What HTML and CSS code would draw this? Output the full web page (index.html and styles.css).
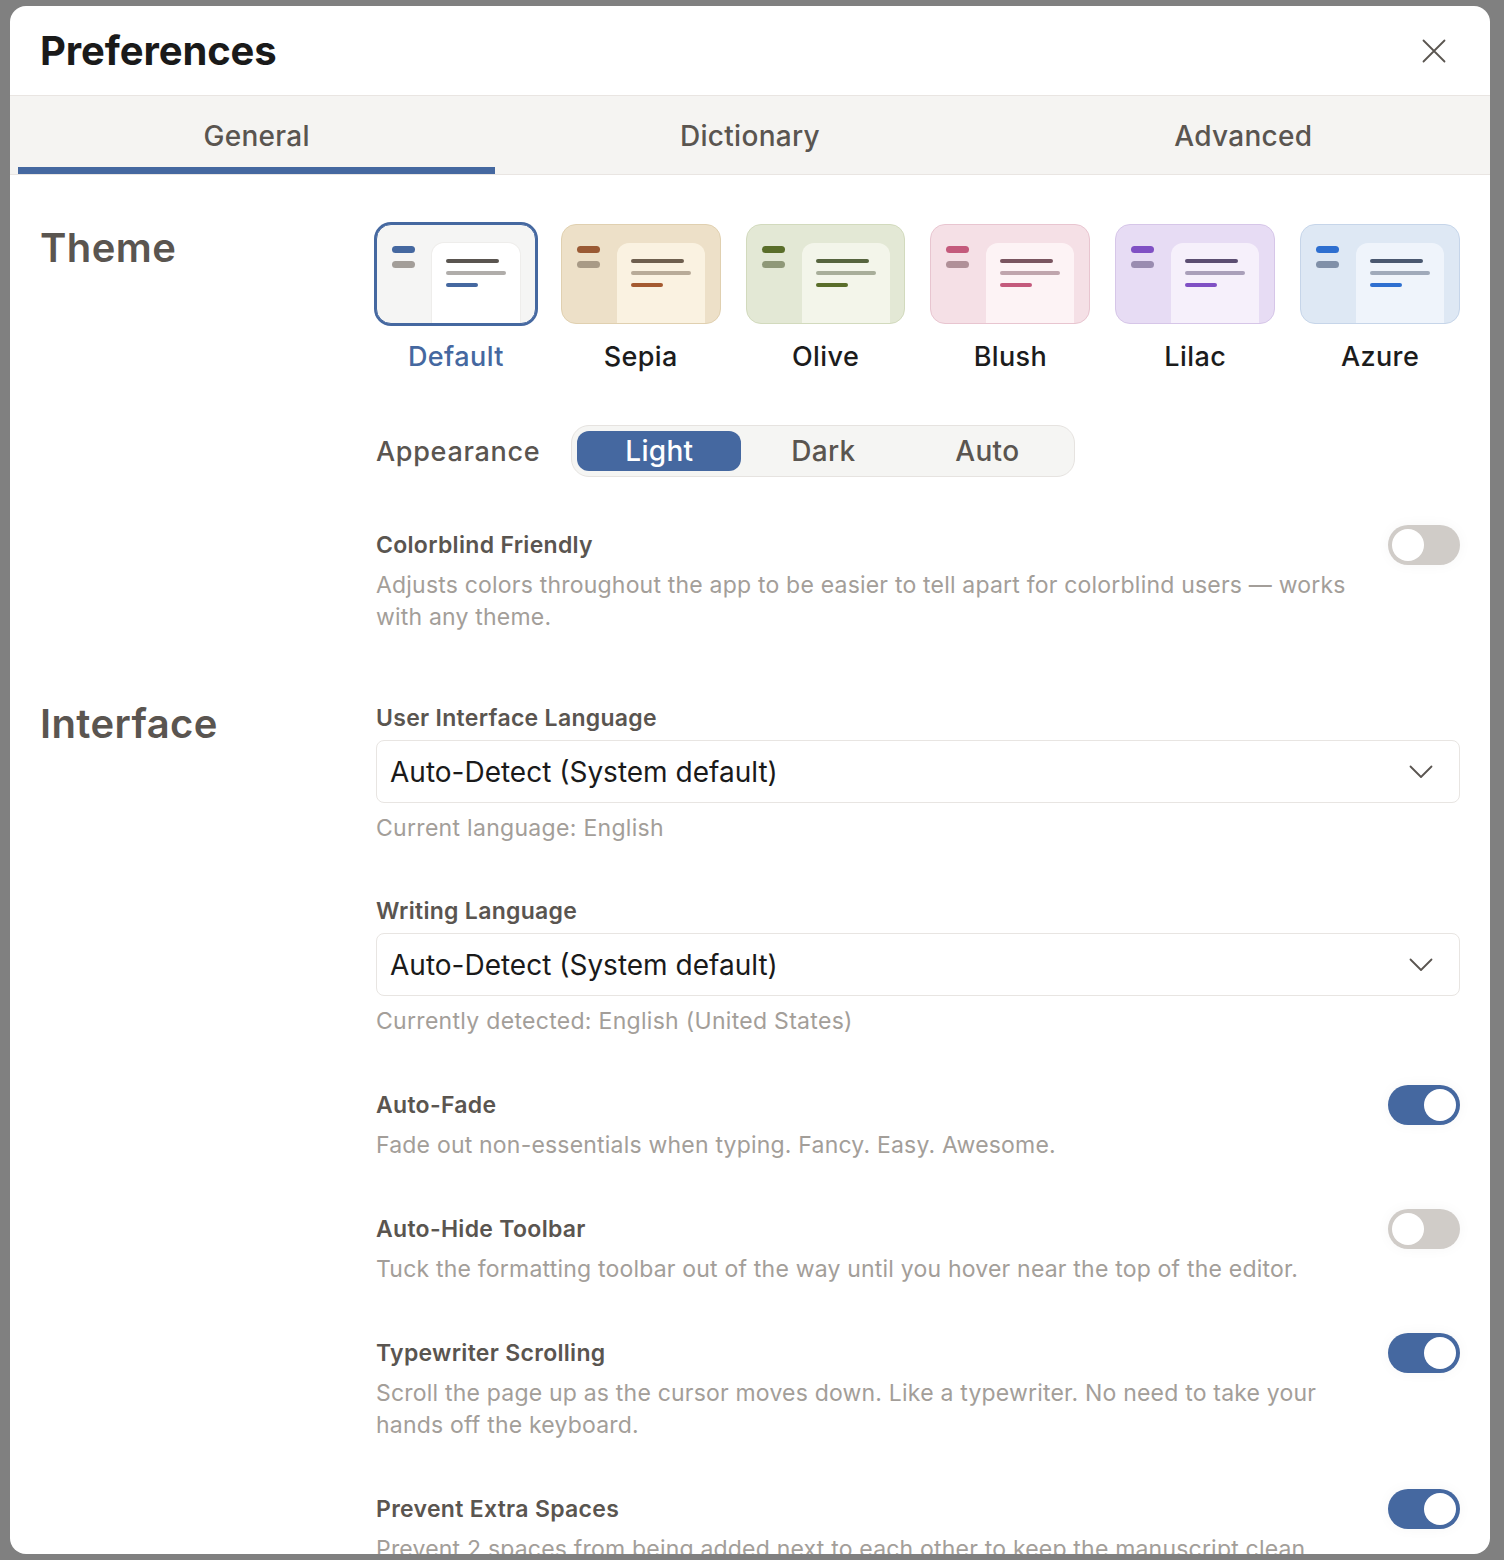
FILE: index.html
```html
<!DOCTYPE html>
<html lang="en">
<head>
    <meta charset="UTF-8">
    <meta name="viewport" content="width=device-width, initial-scale=1.0">
    <title>Preferences</title>
    <link rel="stylesheet" href="styles.css">
</head>
<body>
    <div class="backdrop">
        <div class="modal">
            <div class="modal-header">
                <h1>Preferences</h1>
                <button class="close-btn" aria-label="Close">
                    <svg width="24" height="24" viewBox="0 0 24 24" fill="none" stroke="#5a5550" stroke-width="1.8" stroke-linecap="round">
                        <path d="M1.5 1.5 L22.5 22.5 M22.5 1.5 L1.5 22.5"/>
                    </svg>
                </button>
            </div>

            <div class="tabs">
                <div class="tab active">General</div>
                <div class="tab">Dictionary</div>
                <div class="tab">Advanced</div>
            </div>

            <div class="content">
                <!-- Theme -->
                <div class="section">
                    <h2 class="section-title">Theme</h2>
                    <div class="section-body">
                        <div class="theme-grid">
                            <div class="theme-option selected theme-default">
                                <div class="swatch">
                                    <div class="swatch-side"><span class="pill a"></span><span class="pill b"></span></div>
                                    <div class="swatch-page"><span class="line a"></span><span class="line b"></span><span class="line c"></span></div>
                                </div>
                                <div class="theme-name">Default</div>
                            </div>
                            <div class="theme-option theme-sepia">
                                <div class="swatch">
                                    <div class="swatch-side"><span class="pill a"></span><span class="pill b"></span></div>
                                    <div class="swatch-page"><span class="line a"></span><span class="line b"></span><span class="line c"></span></div>
                                </div>
                                <div class="theme-name">Sepia</div>
                            </div>
                            <div class="theme-option theme-olive">
                                <div class="swatch">
                                    <div class="swatch-side"><span class="pill a"></span><span class="pill b"></span></div>
                                    <div class="swatch-page"><span class="line a"></span><span class="line b"></span><span class="line c"></span></div>
                                </div>
                                <div class="theme-name">Olive</div>
                            </div>
                            <div class="theme-option theme-blush">
                                <div class="swatch">
                                    <div class="swatch-side"><span class="pill a"></span><span class="pill b"></span></div>
                                    <div class="swatch-page"><span class="line a"></span><span class="line b"></span><span class="line c"></span></div>
                                </div>
                                <div class="theme-name">Blush</div>
                            </div>
                            <div class="theme-option theme-lilac">
                                <div class="swatch">
                                    <div class="swatch-side"><span class="pill a"></span><span class="pill b"></span></div>
                                    <div class="swatch-page"><span class="line a"></span><span class="line b"></span><span class="line c"></span></div>
                                </div>
                                <div class="theme-name">Lilac</div>
                            </div>
                            <div class="theme-option theme-azure">
                                <div class="swatch">
                                    <div class="swatch-side"><span class="pill a"></span><span class="pill b"></span></div>
                                    <div class="swatch-page"><span class="line a"></span><span class="line b"></span><span class="line c"></span></div>
                                </div>
                                <div class="theme-name">Azure</div>
                            </div>
                        </div>

                        <div class="appearance-row">
                            <span class="appearance-label">Appearance</span>
                            <div class="segmented">
                                <div class="segment active">Light</div>
                                <div class="segment">Dark</div>
                                <div class="segment">Auto</div>
                            </div>
                        </div>

                        <div class="setting first">
                            <div class="setting-text">
                                <div class="setting-title">Colorblind Friendly</div>
                                <div class="setting-desc">Adjusts colors throughout the app to be easier to tell apart for colorblind users — works with any theme.</div>
                            </div>
                            <div class="toggle"><span class="knob"></span></div>
                        </div>
                    </div>
                </div>

                <!-- Interface -->
                <div class="section">
                    <h2 class="section-title raised">Interface</h2>
                    <div class="section-body">
                        <div class="field">
                            <div class="setting-title">User Interface Language</div>
                            <div class="select">
                                <span>Auto-Detect (System default)</span>
                                <svg width="24" height="14" viewBox="0 0 24 14" fill="none" stroke="#5a5550" stroke-width="1.8" stroke-linecap="round" stroke-linejoin="round"><path d="M1.5 1.5 L12 12 L22.5 1.5"/></svg>
                            </div>
                            <div class="field-hint">Current language: English</div>
                        </div>

                        <div class="field">
                            <div class="setting-title">Writing Language</div>
                            <div class="select">
                                <span>Auto-Detect (System default)</span>
                                <svg width="24" height="14" viewBox="0 0 24 14" fill="none" stroke="#5a5550" stroke-width="1.8" stroke-linecap="round" stroke-linejoin="round"><path d="M1.5 1.5 L12 12 L22.5 1.5"/></svg>
                            </div>
                            <div class="field-hint">Currently detected: English (United States)</div>
                        </div>

                        <div class="setting">
                            <div class="setting-text">
                                <div class="setting-title">Auto-Fade</div>
                                <div class="setting-desc">Fade out non-essentials when typing. Fancy. Easy. Awesome.</div>
                            </div>
                            <div class="toggle on"><span class="knob"></span></div>
                        </div>

                        <div class="setting">
                            <div class="setting-text">
                                <div class="setting-title">Auto-Hide Toolbar</div>
                                <div class="setting-desc">Tuck the formatting toolbar out of the way until you hover near the top of the editor.</div>
                            </div>
                            <div class="toggle"><span class="knob"></span></div>
                        </div>

                        <div class="setting">
                            <div class="setting-text">
                                <div class="setting-title">Typewriter Scrolling</div>
                                <div class="setting-desc">Scroll the page up as the cursor moves down. Like a typewriter. No need to take your hands off the keyboard.</div>
                            </div>
                            <div class="toggle on"><span class="knob"></span></div>
                        </div>

                        <div class="setting">
                            <div class="setting-text">
                                <div class="setting-title">Prevent Extra Spaces</div>
                                <div class="setting-desc">Prevent 2 spaces from being added next to each other to keep the manuscript clean.</div>
                            </div>
                            <div class="toggle on"><span class="knob"></span></div>
                        </div>
                    </div>
                </div>
            </div>
        </div>
    </div>
</body>
</html>
```

FILE: styles.css
```css
* {
    box-sizing: border-box;
}

body {
    margin: 0;
    background-color: #808080;
    font-family: Inter, "Liberation Sans", sans-serif;
    height: 1560px;
    overflow: hidden;
}

.backdrop {
    padding: 6px 14px 6px 10px;
}

.modal {
    background-color: #ffffff;
    border-radius: 16px;
    height: 1548px;
    overflow: hidden;
    display: flex;
    flex-direction: column;
}

.modal-header {
    height: 89px;
    flex-shrink: 0;
    display: flex;
    align-items: center;
    justify-content: space-between;
    padding: 0 34px 0 30px;
}

.modal-header h1 {
    margin: 0;
    font-size: 40px;
    font-weight: 700;
    color: #1a1a1a;
    letter-spacing: -0.1px;
}

.close-btn {
    width: 44px;
    height: 44px;
    border: none;
    background: none;
    padding: 0;
    display: flex;
    align-items: center;
    justify-content: center;
    cursor: pointer;
}

.tabs {
    flex-shrink: 0;
    display: grid;
    grid-template-columns: repeat(3, 1fr);
    gap: 16px;
    padding: 0 8px;
    background-color: #f5f4f2;
    border-top: 1.5px solid #e9e5e2;
    border-bottom: 1.5px solid #e9e5e2;
}

.tab {
    height: 78px;
    display: flex;
    align-items: center;
    justify-content: center;
    font-size: 28px;
    letter-spacing: 0.3px;
    font-weight: 500;
    color: #5a5550;
    border-bottom: 7px solid transparent;
    padding-top: 9px;
}

.tab.active {
    border-bottom-color: #4568a0;
}

.content {
    padding: 49px 30px 0;
}

.section {
    display: grid;
    grid-template-columns: 336px minmax(0, 1fr);
    margin-bottom: 70px;
}

.section-title {
    margin: 0;
    font-size: 40px;
    line-height: 48px;
    font-weight: 600;
    letter-spacing: 0.4px;
    color: #5a5550;
}

.section-title.raised {
    margin-top: -3px;
}

/* theme swatches */
.theme-grid {
    display: grid;
    grid-template-columns: repeat(6, minmax(0, 1fr));
    gap: 25px;
}

.theme-option {
    display: flex;
    flex-direction: column;
    align-items: center;
}

.swatch {
    width: 100%;
    height: 100px;
    border-radius: 15px;
    border: 1.5px solid;
    display: flex;
    padding: 18px 16px 0 15px;
    overflow: hidden;
}

.swatch-side {
    width: 23px;
    display: flex;
    flex-direction: column;
    gap: 8px;
    padding-top: 3px;
    flex-shrink: 0;
}

.pill {
    display: block;
    height: 7px;
    border-radius: 4px;
}

.swatch-page {
    flex: 1;
    margin-left: 17px;
    border-radius: 12px 12px 0 0;
    padding: 16px 14px 0;
    display: flex;
    flex-direction: column;
    gap: 8px;
}

.line {
    display: block;
    height: 4px;
    border-radius: 2px;
}

.line.a { width: 53px; }
.line.b { width: 60px; }
.line.c { width: 32px; }

.theme-name {
    margin-top: 17px;
    font-size: 27px;
    line-height: 32px;
    letter-spacing: 0.4px;
    font-weight: 500;
    color: #1c1c1c;
}

.theme-option.selected .swatch {
    box-shadow: 0 0 0 2px #4568a0;
}

.theme-option.selected .theme-name {
    color: #4568a0;
}

.theme-default .swatch { background: #f5f5f4; border-color: #4568a0; }
.theme-default .pill.a { background: #4568a0; }
.theme-default .pill.b { background: #a39e99; }
.theme-default .swatch-page { background: #ffffff; box-shadow: 0 0 0 1px #eeedeb; }
.theme-default .line.a { background: #5a5550; }
.theme-default .line.b { background: #b0adaa; }
.theme-default .line.c { background: #4568a0; }

.theme-sepia .swatch { background: #ede0c8; border-color: #e0d0b0; }
.theme-sepia .pill.a { background: #9a5a34; }
.theme-sepia .pill.b { background: #a89a86; }
.theme-sepia .swatch-page { background: #faf2e1; }
.theme-sepia .line.a { background: #6e5f4e; }
.theme-sepia .line.b { background: #b8ab98; }
.theme-sepia .line.c { background: #a45a30; }

.theme-olive .swatch { background: #e3e8d5; border-color: #d2dabd; }
.theme-olive .pill.a { background: #5a6e2a; }
.theme-olive .pill.b { background: #8f9878; }
.theme-olive .swatch-page { background: #f3f5ea; }
.theme-olive .line.a { background: #56643e; }
.theme-olive .line.b { background: #a8ae9a; }
.theme-olive .line.c { background: #5a6e2a; }

.theme-blush .swatch { background: #f5e0e6; border-color: #e8c5d0; }
.theme-blush .pill.a { background: #c45a7c; }
.theme-blush .pill.b { background: #b09098; }
.theme-blush .swatch-page { background: #fdf3f5; }
.theme-blush .line.a { background: #7a5560; }
.theme-blush .line.b { background: #c0a5ad; }
.theme-blush .line.c { background: #c45a7c; }

.theme-lilac .swatch { background: #e7dcf4; border-color: #d6c6e8; }
.theme-lilac .pill.a { background: #8050c4; }
.theme-lilac .pill.b { background: #9a8cb0; }
.theme-lilac .swatch-page { background: #f6f0fb; }
.theme-lilac .line.a { background: #5c4e72; }
.theme-lilac .line.b { background: #aaa0ba; }
.theme-lilac .line.c { background: #8050c4; }

.theme-azure .swatch { background: #dee8f4; border-color: #c6d5e9; }
.theme-azure .pill.a { background: #2e6fd0; }
.theme-azure .pill.b { background: #8090a8; }
.theme-azure .swatch-page { background: #eff4fb; }
.theme-azure .line.a { background: #4a5870; }
.theme-azure .line.b { background: #a0aaba; }
.theme-azure .line.c { background: #2e6fd0; }

/* appearance */
.appearance-row {
    margin-top: 52px;
    display: flex;
    align-items: center;
    gap: 31px;
}

.appearance-label {
    font-size: 27px;
    letter-spacing: 0.7px;
    font-weight: 500;
    color: #5a5550;
}

.segmented {
    display: grid;
    grid-template-columns: repeat(3, 164px);
    padding: 5px;
    background-color: #f5f5f3;
    border: 1.5px solid #e6e3e0;
    border-radius: 18px;
}

.segment {
    height: 40px;
    display: flex;
    align-items: center;
    justify-content: center;
    font-size: 28px;
    letter-spacing: 0.3px;
    font-weight: 500;
    color: #5a5550;
    border-radius: 12px;
}

.segment.active {
    background-color: #4568a0;
    color: #ffffff;
}

/* settings rows */
.setting {
    display: flex;
    justify-content: space-between;
    align-items: flex-start;
    gap: 30px;
    margin-top: 53px;
}

.setting-text {
    flex: 1;
    max-width: 985px;
}

.setting-title {
    font-size: 23px;
    line-height: 30px;
    letter-spacing: 0.3px;
    font-weight: 600;
    color: #5a5550;
}

.setting-desc {
    margin-top: 9px;
    font-size: 23px;
    line-height: 32px;
    letter-spacing: 0.2px;
    color: #a39e99;
}

.toggle {
    flex-shrink: 0;
    width: 72px;
    height: 40px;
    margin-top: -5px;
    border-radius: 20px;
    background-color: #d0ccc8;
    padding: 4px;
    display: flex;
    justify-content: flex-start;
    box-shadow: 0 0 14px rgba(0, 0, 0, 0.04);
}

.toggle.on {
    background-color: #4568a0;
    justify-content: flex-end;
}

.knob {
    width: 32px;
    height: 32px;
    border-radius: 50%;
    background-color: #ffffff;
}

/* select fields */
.field + .field {
    margin-top: 52px;
}

.select {
    margin-top: 7px;
    height: 63px;
    border: 1.5px solid #e8e5e2;
    border-radius: 8px;
    padding: 0 26px 0 13px;
    display: flex;
    align-items: center;
    justify-content: space-between;
    font-size: 28px;
    color: #1a1a1a;
}

.field-hint {
    margin-top: 9px;
    font-size: 23px;
    line-height: 32px;
    letter-spacing: 0.3px;
    color: #a39e99;
}
```
